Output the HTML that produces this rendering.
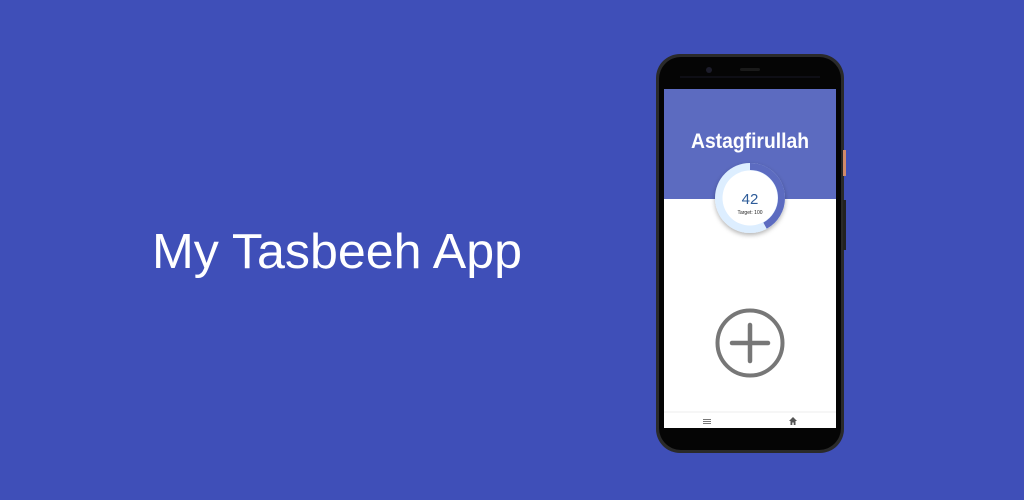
<!DOCTYPE html>
<html><head><style>
html,body{margin:0;padding:0;}
body{width:1024px;height:500px;background:#3f4fb8;overflow:hidden;position:relative;font-family:"Liberation Sans",sans-serif;}
</style></head><body>
<svg width="1024" height="500" viewBox="0 0 1024 500" style="position:absolute;left:0;top:0">
<defs>
<filter id="sh" x="-30%" y="-30%" width="160%" height="160%"><feDropShadow dx="0" dy="2" stdDeviation="2.5" flood-color="#000" flood-opacity="0.3"/></filter>
</defs>
<text x="152" y="268" font-family="Liberation Sans, sans-serif" font-size="49" fill="#fff" textLength="370" lengthAdjust="spacingAndGlyphs">My Tasbeeh App</text>
<rect x="656" y="54" width="188" height="399" rx="24" fill="#2a2a2a"/>
<rect x="659" y="57" width="182" height="393" rx="22" fill="#050505"/>
<rect x="843" y="150" width="3" height="26" fill="#d08a6a"/>
<rect x="843" y="200" width="3" height="50" fill="#222"/>
<circle cx="709" cy="70" r="3" fill="#1c1c2a"/>
<rect x="740" y="68" width="20" height="3" rx="1.5" fill="#1a1a1a"/>
<line x1="680" y1="77" x2="820" y2="77" stroke="#161625" stroke-width="1"/>
<rect x="664" y="89" width="172" height="339" fill="#fff"/>
<rect x="664" y="89" width="172" height="110" fill="#5c6bc0"/>
<text x="750" y="148" text-anchor="middle" font-size="21" font-weight="bold" fill="#fff" font-family="Liberation Sans, sans-serif" textLength="118" lengthAdjust="spacingAndGlyphs">Astagfirullah</text>
<circle cx="750" cy="198" r="35" fill="#ddeeff" filter="url(#sh)"/>
<circle cx="750" cy="198" r="31.5" fill="none" stroke="#5c6bc0" stroke-width="7" stroke-dasharray="83.1 200" transform="rotate(-90 750 198)"/>
<circle cx="750" cy="198" r="27.5" fill="#fff"/>
<text x="750" y="204" text-anchor="middle" font-size="15" fill="#2e5c99">42</text>
<text x="750" y="214" text-anchor="middle" font-size="5" fill="#222">Target: 100</text>
<circle cx="750" cy="343" r="32.5" fill="none" stroke="#777" stroke-width="4"/>
<line x1="750" y1="325" x2="750" y2="361" stroke="#777" stroke-width="4.5" stroke-linecap="round"/>
<line x1="732" y1="343" x2="768" y2="343" stroke="#777" stroke-width="4.5" stroke-linecap="round"/>
<line x1="664" y1="412" x2="836" y2="412" stroke="#eee" stroke-width="1"/>
<rect x="703" y="419" width="8" height="1" fill="#777"/>
<rect x="703" y="421" width="8" height="1" fill="#777"/>
<rect x="703" y="423" width="8" height="1" fill="#777"/>
<path d="M793 417 L789 421 H790.5 V425 H792.3 V422.5 H793.7 V425 H795.5 V421 H797 Z" fill="#555"/>
</svg>
</body></html>
